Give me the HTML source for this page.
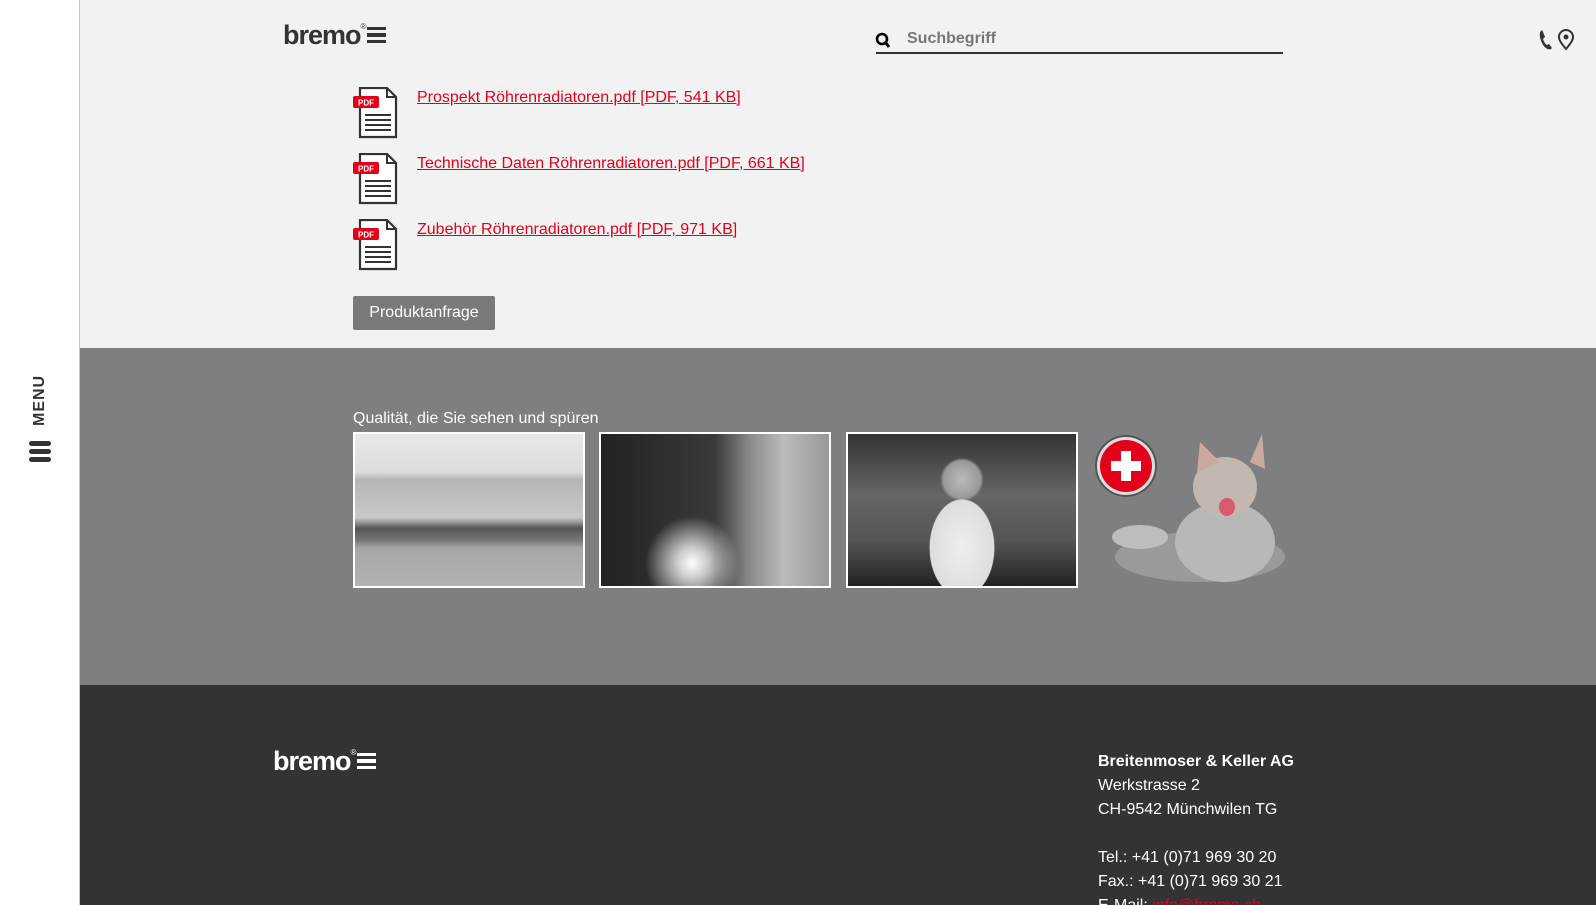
<!DOCTYPE html>
<html><head><meta charset="utf-8"><style>
*{margin:0;padding:0;box-sizing:border-box}
html{width:1596px;height:905px;overflow:hidden;background:#fff}
body{width:1596px;height:905px;overflow:hidden;font-family:"Liberation Sans",Arial,sans-serif;background:#f2f2f2;position:relative}
#wrap{position:absolute;left:0;top:0;width:1596px;height:905px;overflow:hidden}
.side{position:absolute;left:0;top:0;width:80px;height:905px;background:#fff;border-right:1px solid #c8c8c8;z-index:2}
.menu{position:absolute;left:31px;top:426px;transform:rotate(-90deg);transform-origin:left top;font-weight:bold;font-size:16px;color:#333;letter-spacing:1px}
.ham{position:absolute;left:29px;width:22px;height:5px;border-radius:3px;background:#333}
.logo{position:absolute;font-size:27px;color:#333;letter-spacing:-1px;font-weight:bold}
.logo sup{font-size:8px;font-weight:normal;vertical-align:top;position:relative;top:2px}
.bars{display:inline-block;vertical-align:middle;width:19px;margin-left:2px;position:relative;top:-2px}
.bars i{display:block;height:3.5px;background:currentColor;margin:3px 0}
.a{position:absolute;left:417px;font-size:16px;color:#e2001a;text-decoration:underline}
.pdf{position:absolute;left:353px}
.gray{position:absolute;left:80px;top:348px;width:1516px;height:337px;background:#7f7f81}
.foot{position:absolute;left:80px;top:685px;width:1516px;height:220px;background:#333}
.img{position:absolute;top:432px;width:232px;height:156px;border:2px solid #fff}
.addr{position:absolute;left:1098px;top:750px;color:#fff;font-size:16px;line-height:24px}
</style></head><body><div id="wrap">
<div class="side">
 <div class="menu">MENU</div>
 <div class="ham" style="top:441px"></div>
 <div class="ham" style="top:449px"></div>
 <div class="ham" style="top:457px"></div>
</div>

<div class="logo" style="left:283px;top:20px">bremo<sup>®</sup><span class="bars"><i></i><i></i><i></i></span></div>

<svg style="position:absolute;left:875px;top:32px" width="16" height="17" viewBox="0 0 16 17"><circle cx="7" cy="7" r="5" fill="none" stroke="#000" stroke-width="2.6"/><path d="M10 10l4 5" stroke="#000" stroke-width="3"/></svg>
<div style="position:absolute;left:907px;top:30px;font-size:16px;font-weight:bold;color:#777">Suchbegriff</div>
<div style="position:absolute;left:876px;top:52px;width:407px;height:2px;background:#333"></div>

<svg style="position:absolute;left:1537px;top:27px" width="38" height="24" viewBox="0 0 38 24"><path d="M5 3c-3 2-3 7 0 13s7 7 9 6l1-1-3-4-2 1c-1 0-3-3-4-6l2-2-2-5z" fill="#333"/><path d="M29 22c-5-6-7-9-7-12a7 7 0 0 1 14 0c0 3-2 6-7 12z" fill="none" stroke="#333" stroke-width="2"/><circle cx="29" cy="10" r="2.5" fill="#333"/></svg>

<svg width="0" height="0" style="position:absolute"><defs><g id="pdf"><path d="M7 1h27l9 9v40H7z" fill="#fff" stroke="#333" stroke-width="2.2"/><path d="M34 1v9h9" fill="none" stroke="#333" stroke-width="2"/><rect x="0" y="9" width="26" height="12" rx="2" fill="#e2001a"/><text x="13" y="18.5" font-size="8" fill="#fff" text-anchor="middle" font-family="Liberation Sans" font-weight="bold">PDF</text><path d="M12 28h26M12 33h26M12 38h26M12 43h26" stroke="#333" stroke-width="2"/></g></defs></svg>
<svg class="pdf" style="top:87px" width="46" height="52"><use href="#pdf"/></svg>
<svg class="pdf" style="top:153px" width="46" height="52"><use href="#pdf"/></svg>
<svg class="pdf" style="top:219px" width="46" height="52"><use href="#pdf"/></svg>
<a class="a" style="top:89px">Prospekt Röhrenradiatoren.pdf [PDF, 541 KB]</a>
<a class="a" style="top:155px">Technische Daten Röhrenradiatoren.pdf [PDF, 661 KB]</a>
<a class="a" style="top:221px">Zubehör Röhrenradiatoren.pdf [PDF, 971 KB]</a>
<div style="position:absolute;left:353px;top:296px;width:142px;height:34px;background:#7a7a7a;border-radius:2px;color:#fff;font-size:16px;line-height:34px;text-align:center">Produktanfrage</div>

<div class="gray"></div>
<div style="position:absolute;left:353px;top:410px;color:#fff;font-size:16px">Qualität, die Sie sehen und spüren</div>
<div class="img" style="left:353px;background:linear-gradient(#e8e8e8 0,#dcdcdc 25%,#b5b5b5 30%,#c9c9c9 55%,#555 62%,#777 70%,#a6a6a6 75%,#b3b3b3 100%)"></div>
<div class="img" style="left:599px;background:radial-gradient(circle at 40% 85%,#fff 0,#ccc 8%,transparent 25%),linear-gradient(90deg,#222,#3a3a3a 50%,#888 65%,#bbb 80%,#999)"></div>
<div class="img" style="left:846px;background:radial-gradient(ellipse 40px 60px at 50% 75%,#eee 0,#ddd 80%,transparent 82%),radial-gradient(circle at 50% 30%,#bbb 0,#999 12%,transparent 14%),linear-gradient(#333,#666 40%,#555 70%,#222)"></div>
<svg style="position:absolute;left:1094px;top:434px" width="64" height="64"><circle cx="32" cy="32" r="30" fill="#ddd" stroke="#555" stroke-width="2"/><circle cx="32" cy="32" r="26" fill="#e2001a"/><path d="M27 17h10v10h10v10H37v10H27V37H17V27h10z" fill="#fff"/></svg>
<svg style="position:absolute;left:1105px;top:432px" width="185" height="158"><ellipse cx="95" cy="125" rx="85" ry="25" fill="#9a9a9a"/><ellipse cx="120" cy="110" rx="50" ry="40" fill="#b8b8b8"/><ellipse cx="120" cy="55" rx="32" ry="30" fill="#c2b8b0"/><path d="M92 40l3-30 20 20zM145 30l12-28 3 35z" fill="#c9a9a0"/><ellipse cx="122" cy="75" rx="8" ry="9" fill="#d85a70"/><ellipse cx="35" cy="105" rx="28" ry="12" fill="#bdbdbd"/></svg>

<div class="foot"></div>
<div class="logo" style="left:273px;top:746px;color:#fff">bremo<sup>®</sup><span class="bars"><i></i><i></i><i></i></span></div>
<div class="addr"><b>Breitenmoser &amp; Keller AG</b><br>Werkstrasse 2<br>CH-9542 Münchwilen TG<br><br>Tel.: +41 (0)71 969 30 20<br>Fax.: +41 (0)71 969 30 21<br>E-Mail: <span style="color:#e2001a">info@bremo.ch</span></div>
</div></body></html>
